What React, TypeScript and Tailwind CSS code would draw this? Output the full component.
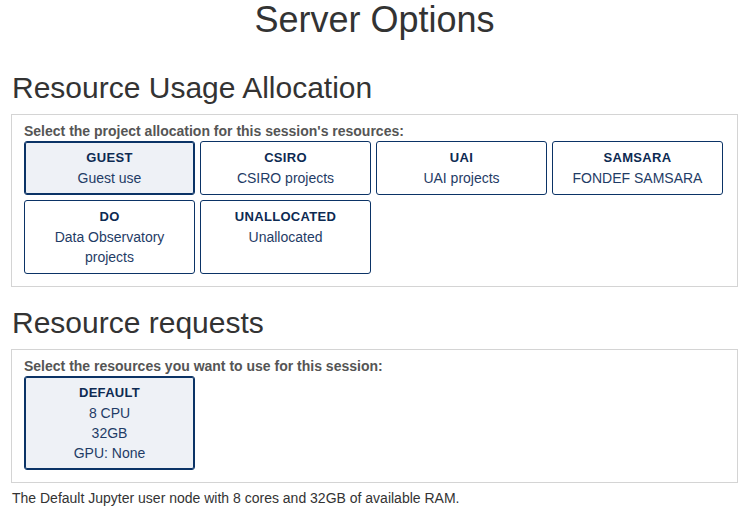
import React from "react";

type Choice = {
  title: string;
  lines: string[];
  selected?: boolean;
};

const allocations: Choice[] = [
  { title: "GUEST", lines: ["Guest use"], selected: true },
  { title: "CSIRO", lines: ["CSIRO projects"] },
  { title: "UAI", lines: ["UAI projects"] },
  { title: "SAMSARA", lines: ["FONDEF SAMSARA"] },
  { title: "DO", lines: ["Data Observatory projects"] },
  { title: "UNALLOCATED", lines: ["Unallocated"] },
];

const resources: Choice[] = [
  { title: "DEFAULT", lines: ["8 CPU", "32GB", "GPU: None"], selected: true },
];

function OptionCard({ item }: { item: Choice }) {
  return (
    <div
      className={`w-[171px] rounded-[3px] border border-[#0b3366] px-3 py-1.5 text-center leading-5 ${
        item.selected ? "bg-[#eef1f6] shadow-[inset_0_0_0_1px_#0b3366]" : "bg-white"
      }`}
    >
      <div className="text-[13px] font-bold tracking-[0.3px] text-[#0d2a52]">{item.title}</div>
      {item.lines.map((line) => (
        <div key={line} className="text-[14px] text-[#1f3c66]">
          {line}
        </div>
      ))}
    </div>
  );
}

function Section({ label, items }: { label: string; items: Choice[] }) {
  return (
    <div className="mt-[10px] border border-[#d4d4d4] px-3 pt-2 pb-3">
      <div className="mb-[1px] text-[14px] font-bold leading-[17px] text-[#555555]">{label}</div>
      <div className="flex flex-wrap gap-[5px]">
        {items.map((item) => (
          <OptionCard key={item.title} item={item} />
        ))}
      </div>
    </div>
  );
}

export default function App() {
  return (
    <div className="min-h-[517px] bg-white px-[11px] text-[#333333] [font-family:'Liberation_Sans',Arial,sans-serif]">
      <h1 className="text-center text-[36px] leading-[1.1]">Server Options</h1>

      <h2 className="mt-[31px] pl-px text-[30px] leading-[1.1]">Resource Usage Allocation</h2>
      <Section label="Select the project allocation for this session's resources:" items={allocations} />

      <h2 className="mt-[19px] pl-px text-[30px] leading-[1.1]">Resource requests</h2>
      <Section label="Select the resources you want to use for this session:" items={resources} />

      <p className="mt-[5px] pl-px text-[14px] leading-5">
        The Default Jupyter user node with 8 cores and 32GB of available RAM.
      </p>
    </div>
  );
}
